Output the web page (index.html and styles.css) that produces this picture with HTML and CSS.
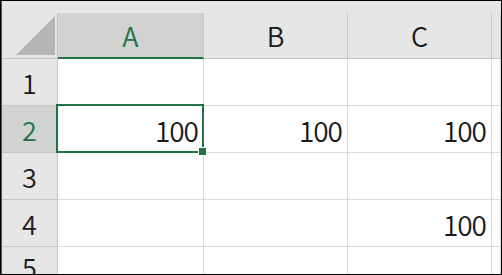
FILE: index.html
```html
<!DOCTYPE html>
<html>
<head>
<meta charset="utf-8">
<link rel="stylesheet" href="styles.css">
</head>
<body>
<div class="frame">
  <div class="sheet">
    <div class="topband"></div>
    <div class="corner"><svg class="tri" width="39" height="39" viewBox="0 0 39 39"><polygon points="39,0 39,39 0,39" fill="#b5b5b5"/></svg></div>
    <div class="colhead sel">A</div>
    <div class="colhead">B</div>
    <div class="colhead">C</div>
    <div class="colhead last"></div>

    <div class="rowhead">1</div>
    <div class="cell"></div><div class="cell"></div><div class="cell"></div><div class="cell last"></div>

    <div class="rowhead sel">2</div>
    <div class="cell active">100<span class="selbox"><span class="handle"></span></span></div><div class="cell">100</div><div class="cell">100</div><div class="cell last"></div>

    <div class="rowhead">3</div>
    <div class="cell"></div><div class="cell"></div><div class="cell"></div><div class="cell last"></div>

    <div class="rowhead">4</div>
    <div class="cell"></div><div class="cell"></div><div class="cell">100</div><div class="cell last"></div>

    <div class="rowhead">5</div>
    <div class="cell"></div><div class="cell"></div><div class="cell"></div><div class="cell last"></div>
  </div>
</div>
</body>
</html>
```
FILE: styles.css
```css
* { box-sizing: border-box; }
html, body { margin: 0; padding: 0; background: #fff; }
.frame {
  width: 502px;
  height: 275px;
  border: 1px solid #000;
  overflow: hidden;
}
.sheet {
  height: 100%;
  border-left: 1px solid #217346;
  display: grid;
  grid-template-columns: 56px 146px 144px 144px 1fr;
  grid-template-rows: 12px 46px 47px 47px 47px 47px 1fr;
  font-family: "Noto Sans CJK JP", "Noto Sans", sans-serif;
  font-weight: 350;
  color: #1a1a1a;
}
.topband {
  grid-column: 1 / -1;
  background: #e6e6e6;
}
.corner {
  background: #e6e6e6;
  border-right: 1px solid #c2c2c2;
  border-bottom: 1px solid #c2c2c2;
  display: flex;
  justify-content: flex-end;
  align-items: flex-end;
  padding: 0 2px 3px 0;
}
.tri { display: block; }
.colhead {
  background: #e6e6e6;
  border-right: 1px solid #c6c6c6;
  border-bottom: 1px solid #c2c2c2;
  display: flex;
  align-items: center;
  justify-content: center;
  font-size: 27px;
}
.colhead.sel {
  background: #d2d2d2;
  color: #217346;
  border-bottom: 2px solid #217346;
  padding-top: 1px;
}
.rowhead {
  background: #e6e6e6;
  border-right: 1px solid #c2c2c2;
  border-bottom: 1px solid #c8c8c8;
  display: flex;
  align-items: center;
  justify-content: center;
  font-size: 27px;
}
.rowhead.sel {
  background: #d2d2d2;
  color: #217346;
}
.cell {
  border-right: 1px solid #dadada;
  border-bottom: 1px solid #dadada;
  display: flex;
  align-items: center;
  justify-content: flex-end;
  padding-right: 5px;
  padding-top: 1px;
  font-size: 28px;
  letter-spacing: -1px;
}
.active { position: relative; }
.selbox {
  position: absolute;
  left: -2px;
  top: -2px;
  right: -1px;
  bottom: -1px;
  border: 2px solid #217346;
}
.handle {
  position: absolute;
  right: -4px;
  bottom: -4px;
  width: 7px;
  height: 7px;
  background: #217346;
  outline: 1px solid #fff;
}
```
